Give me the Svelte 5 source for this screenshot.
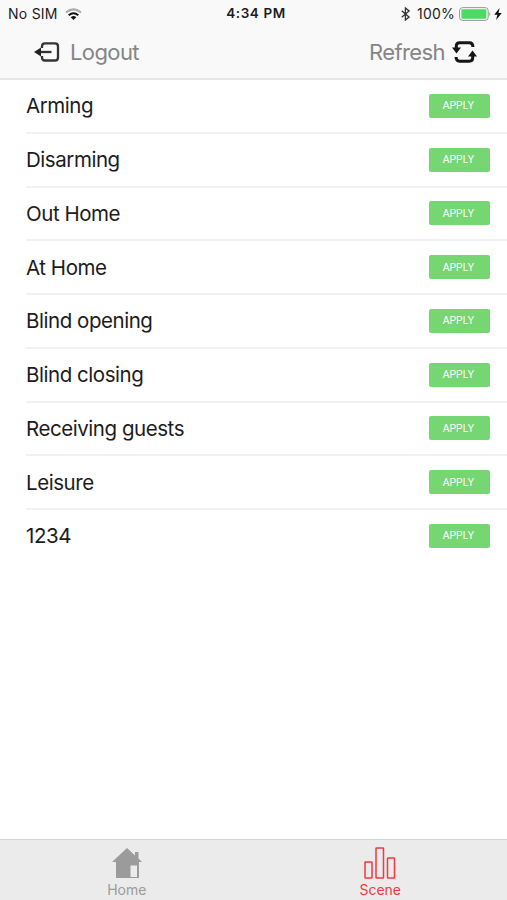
<script>
    let active = "Scene";
    let applied = "";

    const scenes = [
        "Arming",
        "Disarming",
        "Out Home",
        "At Home",
        "Blind opening",
        "Blind closing",
        "Receiving guests",
        "Leisure",
        "1234"
    ];

    function apply(scene) {
        applied = scene;
    }
</script>
<style>
    :global(body) {
        background-color: white;
    }
    main {
        display: flex;
        flex-direction: column;
        height: 900px;
        overflow: hidden;
        background-color: white;
        font-family: Inter, "Liberation Sans", sans-serif;
        color: #1c1c1c;
    }
    button {
        margin: 0;
        padding: 0;
        border: none;
        background: none;
        font-family: inherit;
        color: inherit;
    }
    svg {
        display: block;
        flex: none;
    }
    header {
        box-sizing: border-box;
        height: 80px;
        flex: none;
        background-color: #f9f9f9;
        border-bottom: 2px solid #e6e6e6;
    }
    .status {
        display: grid;
        grid-template-columns: 1fr auto 1fr;
        align-items: center;
        height: 27px;
        padding: 0 5px 0 8px;
        font-size: 14px;
        line-height: 27px;
    }
    .carrier, .power {
        display: flex;
        align-items: center;
    }
    .carrier {
        letter-spacing: 0.25px;
    }
    .carrier svg {
        margin-left: 7px;
    }
    .time {
        font-weight: 600;
        font-size: 13.5px;
        letter-spacing: 0.6px;
        padding-left: 2px;
    }
    .power {
        justify-content: flex-end;
    }
    .power span {
        margin: 0 4px 0 7px;
        letter-spacing: 0.2px;
    }
    .power svg:last-child {
        margin-left: 2px;
    }
    .actions {
        display: flex;
        justify-content: space-between;
        height: 50px;
        padding: 0 30px 0 34px;
    }
    .actions button {
        display: flex;
        align-items: center;
        font-size: 22px;
        color: #858585;
    }
    .logout span {
        margin-left: 10px;
        letter-spacing: -0.6px;
    }
    .refresh span {
        margin-right: 7px;
        letter-spacing: -0.6px;
    }
    ul {
        flex: 1;
        margin: 0;
        padding: 0 0 0 26px;
        list-style-type: none;
    }
    li {
        display: flex;
        box-sizing: border-box;
        justify-content: space-between;
        align-items: center;
        height: 53.75px;
        padding-right: 17px;
        border-bottom: 2px solid #f1f1f1;
        font-size: 20.5px;
    }
    li:last-child {
        border-bottom-color: transparent;
    }
    .sceneName {
        letter-spacing: -0.45px;
    }
    .apply {
        width: 61px;
        height: 24px;
        padding-right: 2px;
        border-radius: 2px;
        background-color: #76d672;
        color: white;
        font-family: "Liberation Sans", Arial, sans-serif;
        font-size: 10px;
    }
    nav {
        display: flex;
        box-sizing: border-box;
        height: 61px;
        border-top: 1px solid #d4d4d4;
        background-color: #ebebeb;
    }
    nav button {
        display: flex;
        flex: 1;
        flex-direction: column;
        align-items: center;
        padding-top: 6px;
        font-size: 14px;
        line-height: 17px;
        color: #9b9b9b;
    }
    nav svg {
        margin-bottom: 1px;
    }
    nav .active {
        color: #f03a40;
    }
</style>
<main>
    <header>
        <div class="status">
            <div class="carrier">
                No SIM
                <svg width="17" height="12" viewBox="0 0 17 12" fill="none" stroke="#111" stroke-width="2">
                    <path d="M1 4.5Q8.5-1.8 16 4.5" stroke="#aaa" />
                    <path d="M3.7 7.3Q8.5 3.3 13.3 7.3" />
                    <path d="M5.7 9.2Q8.5 7 11.3 9.2L8.5 12Z" fill="#111" stroke="none" />
                </svg>
            </div>
            <div class="time">4:34 PM</div>
            <div class="power">
                <svg width="9" height="14" viewBox="0 0 9 14" fill="none" stroke="#333" stroke-width="1.3">
                    <path d="M.7 3.8L8 10.1L4.4 13V1L8 3.9L.7 10.2" />
                </svg>
                <span>100%</span>
                <svg width="33" height="14" viewBox="0 0 33 14">
                    <rect x=".6" y=".6" width="28.6" height="12.8" rx="3" fill="#f9f9f9" stroke="#999" />
                    <rect x="2.4" y="2.2" width="25" height="9.6" rx="1" fill="#4cd964" />
                    <path d="M30.3 5Q32.3 7 30.3 9Z" fill="#999" />
                </svg>
                <svg width="8" height="12" viewBox="0 0 8 12" fill="#111">
                    <path d="M5.6 0L.2 6.7H3.4L2.1 12L7.8 4.9H4.5Z" />
                </svg>
            </div>
        </div>
        <div class="actions">
            <button class="logout">
                <svg width="26" height="20" viewBox="0 0 26 20" fill="none" stroke="#333" stroke-width="2.3">
                    <path d="M8 6V4.5Q8 1.4 11 1.4H21Q24 1.4 24 4.4V15.4Q24 18.5 21 18.5H11Q8 18.5 8 15.5V14" />
                    <path d="M5 10H17.5" />
                    <path d="M0 10L7 5.6V14.4Z" fill="#222" stroke="none" />
                </svg>
                <span>Logout</span>
            </button>
            <button class="refresh">
                <span>Refresh</span>
                <svg width="25" height="22" viewBox="0 0 25 22" fill="none" stroke="#161616" stroke-width="3">
                    <path d="M4.3 8V5.2Q4.3 1.8 7.7 1.8H17.5Q20.8 1.8 21 6" />
                    <path d="M20.7 14V16.8Q20.7 20.2 17.3 20.2H7.5Q4.2 20.2 4 16" />
                    <path d="M0 6.5H9L4.5 12.5Z" fill="#161616" stroke="none" />
                    <path d="M16 15.5H25L20.5 9.5Z" fill="#161616" stroke="none" />
                </svg>
            </button>
        </div>
    </header>
    <ul>
        {#each scenes as scene}
            <li>
                <span class="sceneName">{scene}</span>
                <button class="apply" on:click={() => apply(scene)}>APPLY</button>
            </li>
        {/each}
    </ul>
    <nav>
        <button class:active={active === "Home"} on:click={() => active = "Home"}>
            <svg width="32" height="34" viewBox="0 0 32 34">
                <path d="M16 2L24 9.5V6H27.5V12.5L31 16H28V32H26V19.5H19.5V31H26V32H5V16H1Z" fill="currentColor" />
            </svg>
            Home
        </button>
        <button class:active={active === "Scene"} on:click={() => active = "Scene"}>
            <svg width="32" height="34" viewBox="0 0 32 34" fill="none" stroke="currentColor" stroke-width="1.5">
                <rect x="1" y="16" width="7" height="16" rx=".5" />
                <rect x="12" y="2" width="7.5" height="30" rx=".5" />
                <rect x="23.5" y="12" width="7" height="20" rx=".5" />
            </svg>
            Scene
        </button>
    </nav>
</main>
